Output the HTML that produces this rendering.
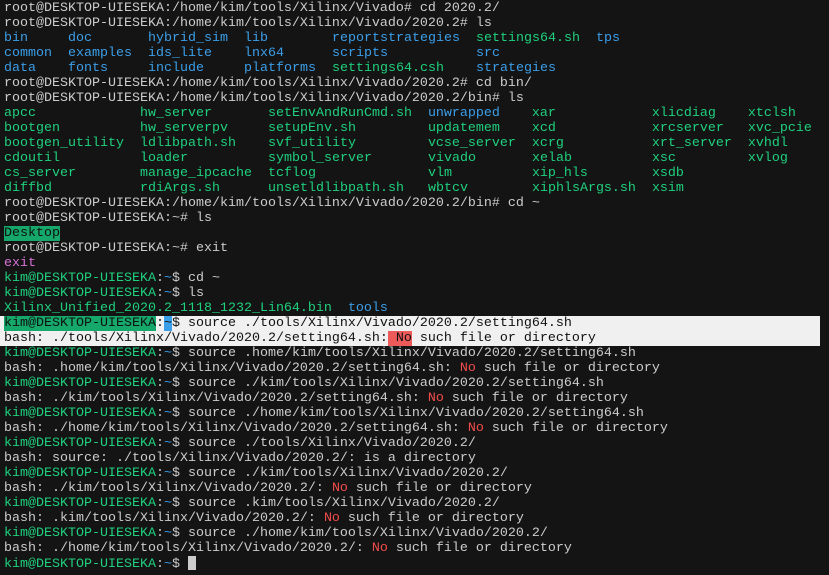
<!DOCTYPE html>
<html><head><meta charset="utf-8"><style>
html,body{margin:0;padding:0;background:#141414;width:829px;height:575px;overflow:hidden}
pre{margin:0;padding:1px 0 0 4px;font-family:"Liberation Mono",monospace;font-size:13.33px;line-height:15px;color:#cccccc;white-space:pre}
.b{color:#3b9ee8}.g{color:#1fd07e}.r{color:#f14c4c}.m{color:#d670d6}
.hl{display:inline-block;background:#f0f0f0;color:#101010;width:816px;margin-left:-4px;padding-left:4px}
.gb{background:#15a86a;color:#101010}.bb{background:#3b9ee8;color:#101010}.rb{background:#ec5a5a;color:#101010}
.cur{display:inline-block;width:8px;height:14px;background:#cccccc;vertical-align:-3px}
</style></head><body><pre>root@DESKTOP-UIESEKA:/home/kim/tools/Xilinx/Vivado# cd 2020.2/
root@DESKTOP-UIESEKA:/home/kim/tools/Xilinx/Vivado/2020.2# ls
<span class="b">bin</span>     <span class="b">doc</span>       <span class="b">hybrid_sim</span>  <span class="b">lib</span>        <span class="b">reportstrategies</span>  <span class="g">settings64.sh</span>  <span class="b">tps</span>
<span class="b">common</span>  <span class="b">examples</span>  <span class="b">ids_lite</span>    <span class="b">lnx64</span>      <span class="b">scripts</span>           <span class="b">src</span>
<span class="b">data</span>    <span class="b">fonts</span>     <span class="b">include</span>     <span class="b">platforms</span>  <span class="g">settings64.csh</span>    <span class="b">strategies</span>
root@DESKTOP-UIESEKA:/home/kim/tools/Xilinx/Vivado/2020.2# cd bin/
root@DESKTOP-UIESEKA:/home/kim/tools/Xilinx/Vivado/2020.2/bin# ls
<span class="g">apcc</span>             <span class="g">hw_server</span>       <span class="g">setEnvAndRunCmd.sh</span>  <span class="b">unwrapped</span>    <span class="g">xar</span>            <span class="g">xlicdiag</span>    <span class="g">xtclsh</span>
<span class="g">bootgen</span>          <span class="g">hw_serverpv</span>     <span class="g">setupEnv.sh</span>         <span class="g">updatemem</span>    <span class="g">xcd</span>            <span class="g">xrcserver</span>   <span class="g">xvc_pcie</span>
<span class="g">bootgen_utility</span>  <span class="g">ldlibpath.sh</span>    <span class="g">svf_utility</span>         <span class="g">vcse_server</span>  <span class="g">xcrg</span>           <span class="g">xrt_server</span>  <span class="g">xvhdl</span>
<span class="g">cdoutil</span>          <span class="g">loader</span>          <span class="g">symbol_server</span>       <span class="g">vivado</span>       <span class="g">xelab</span>          <span class="g">xsc</span>         <span class="g">xvlog</span>
<span class="g">cs_server</span>        <span class="g">manage_ipcache</span>  <span class="g">tcflog</span>              <span class="g">vlm</span>          <span class="g">xip_hls</span>        <span class="g">xsdb</span>
<span class="g">diffbd</span>           <span class="g">rdiArgs.sh</span>      <span class="g">unsetldlibpath.sh</span>   <span class="g">wbtcv</span>        <span class="g">xiphlsArgs.sh</span>  <span class="g">xsim</span>
root@DESKTOP-UIESEKA:/home/kim/tools/Xilinx/Vivado/2020.2/bin# cd ~
root@DESKTOP-UIESEKA:~# ls
<span class="gb">Desktop</span>
root@DESKTOP-UIESEKA:~# exit
<span class="m">exit</span>
<span class="g">kim@DESKTOP-UIESEKA</span>:<span class="b">~</span>$ cd ~
<span class="g">kim@DESKTOP-UIESEKA</span>:<span class="b">~</span>$ ls
<span class="g">Xilinx_Unified_2020.2_1118_1232_Lin64.bin</span>  <span class="b">tools</span>
<span class="hl"><span class="gb">kim@DESKTOP-UIESEKA</span>:<span class="bb">~</span>$ source ./tools/Xilinx/Vivado/2020.2/setting64.sh</span>
<span class="hl">bash: ./tools/Xilinx/Vivado/2020.2/setting64.sh:<span class="rb"> No</span> such file or directory</span>
<span class="g">kim@DESKTOP-UIESEKA</span>:<span class="b">~</span>$ source .home/kim/tools/Xilinx/Vivado/2020.2/setting64.sh
bash: .home/kim/tools/Xilinx/Vivado/2020.2/setting64.sh: <span class="r">No</span> such file or directory
<span class="g">kim@DESKTOP-UIESEKA</span>:<span class="b">~</span>$ source ./kim/tools/Xilinx/Vivado/2020.2/setting64.sh
bash: ./kim/tools/Xilinx/Vivado/2020.2/setting64.sh: <span class="r">No</span> such file or directory
<span class="g">kim@DESKTOP-UIESEKA</span>:<span class="b">~</span>$ source ./home/kim/tools/Xilinx/Vivado/2020.2/setting64.sh
bash: ./home/kim/tools/Xilinx/Vivado/2020.2/setting64.sh: <span class="r">No</span> such file or directory
<span class="g">kim@DESKTOP-UIESEKA</span>:<span class="b">~</span>$ source ./tools/Xilinx/Vivado/2020.2/
bash: source: ./tools/Xilinx/Vivado/2020.2/: is a directory
<span class="g">kim@DESKTOP-UIESEKA</span>:<span class="b">~</span>$ source ./kim/tools/Xilinx/Vivado/2020.2/
bash: ./kim/tools/Xilinx/Vivado/2020.2/: <span class="r">No</span> such file or directory
<span class="g">kim@DESKTOP-UIESEKA</span>:<span class="b">~</span>$ source .kim/tools/Xilinx/Vivado/2020.2/
bash: .kim/tools/Xilinx/Vivado/2020.2/: <span class="r">No</span> such file or directory
<span class="g">kim@DESKTOP-UIESEKA</span>:<span class="b">~</span>$ source ./home/kim/tools/Xilinx/Vivado/2020.2/
bash: ./home/kim/tools/Xilinx/Vivado/2020.2/: <span class="r">No</span> such file or directory
<span class="g">kim@DESKTOP-UIESEKA</span>:<span class="b">~</span>$ <span class="cur"></span></pre></body></html>
